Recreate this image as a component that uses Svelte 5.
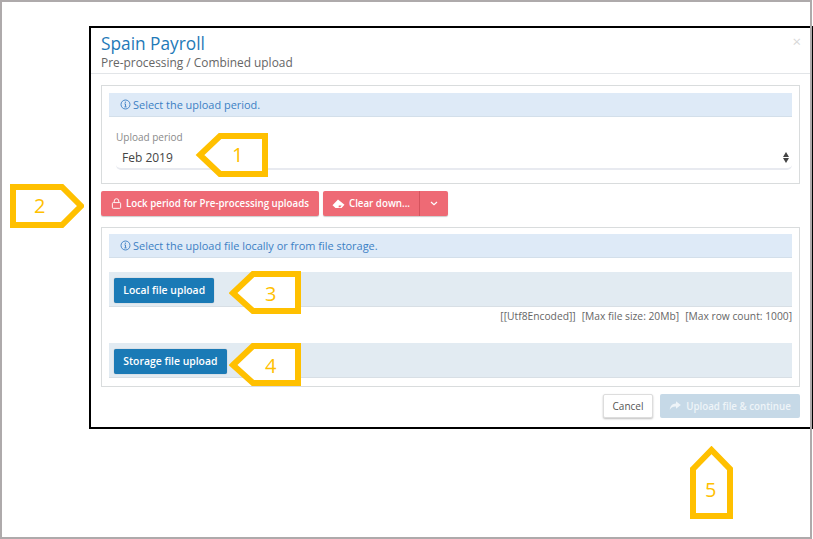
<script>
  const callouts = [
    { n: 1, cls: 'c1', w: 74, h: 44, pts: '5,22 25,3 70,3 70,41 25,41', tx: 37 },
    { n: 2, cls: 'c2', w: 74, h: 44, pts: '3,3 52,3 71,22 52,41 3,41', tx: 24 },
    { n: 3, cls: 'c3', w: 72, h: 44, pts: '4,22 24,3 69,3 69,40 24,40', tx: 36 },
    { n: 4, cls: 'c4', w: 72, h: 44, pts: '4,22 24,3 69,3 69,40 24,40', tx: 36 }
  ];
</script>

<div class="shot">
  <div class="modal">
    <button class="close" aria-label="Close">×</button>
    <header class="head">
      <h1>Spain Payroll</h1>
      <p>Pre-processing / Combined upload</p>
    </header>

    <div class="body">
      <section class="panel first">
        <div class="info">
          <svg class="i" viewBox="0 0 12 12"><circle cx="6" cy="6" r="4.9" /><path d="M6 5.4v3M4.8 8.6h2.4M4.8 5.3H6" /><circle class="dot" cx="5.9" cy="3.5" r=".7" /></svg>
          Select the upload period.
        </div>
        <div class="field">
          <label for="period">Upload period</label>
          <div class="select" id="period">
            <span>Feb 2019</span>
            <span class="arrows"><i class="up"></i><i class="down"></i></span>
          </div>
        </div>
      </section>

      <div class="actions">
        <button class="btn red lock">
          <svg class="bi" viewBox="0 0 12 12"><rect x="1.5" y="5" width="9" height="6.3" rx="1" /><path d="M3.5 5V3.3a2.5 2.5 0 0 1 5 0V5" /></svg>
          Lock period for Pre-processing uploads
        </button>
        <div class="split">
          <button class="btn red clear">
            <svg class="bi wide" viewBox="0 0 13 12"><path class="fill" fill-rule="evenodd" d="M.5 7.2 6 1.6l6.5 5.1-3 3.4h-6zM6.8 7.6h2.9L8.2 9.3H6.6z" /></svg>
            Clear down...
          </button>
          <button class="btn red caret" aria-label="More">
            <svg class="chev" viewBox="0 0 8 5"><path d="M1 1l3 2.6L7 1" /></svg>
          </button>
        </div>
      </div>

      <section class="panel second">
        <div class="info">
          <svg class="i" viewBox="0 0 12 12"><circle cx="6" cy="6" r="4.9" /><path d="M6 5.4v3M4.8 8.6h2.4M4.8 5.3H6" /><circle class="dot" cx="5.9" cy="3.5" r=".7" /></svg>
          Select the upload file locally or from file storage.
        </div>
        <div class="well local"><button class="btn blue">Local file upload</button></div>
        <div class="limits">
          <span>[[Utf8Encoded]]</span>
          <span>[Max file size: 20Mb]</span>
          <span>[Max row count: 1000]</span>
        </div>
        <div class="well"><button class="btn blue">Storage file upload</button></div>
      </section>

      <footer class="foot">
        <button class="btn cancel">Cancel</button>
        <button class="btn upload">
          <svg class="bi big" viewBox="0 0 12 12"><path class="fill" d="M7 1.2 11.8 5 7 8.8V6.5C4.4 6.3 2.4 7 .8 9.8 1 6 3.4 3.6 7 3.4z" /></svg>
          Upload file &amp; continue
        </button>
      </footer>
    </div>
  </div>

  {#each callouts as c}
    <div class="callout {c.cls}">
      <svg width={c.w} height={c.h} viewBox="0 0 {c.w} {c.h}"><polygon points={c.pts} /></svg>
      <span style="left:{c.tx}px">{c.n}</span>
    </div>
  {/each}
  <div class="callout c5">
    <svg width="44" height="74" viewBox="0 0 44 74"><polygon points="3,23 21.5,4 40,23 40,70 3,70" /></svg>
    <span>5</span>
  </div>

  <div class="frame"></div>
</div>

<style>
  :global(body) {
    margin: 0;
    background: #fff;
  }
  .shot {
    position: relative;
    width: 813px;
    height: 539px;
    box-sizing: border-box;
    overflow: hidden;
    padding: 26px 0 0 89px;
    font-family: "Open Sans", sans-serif;
    color: #555;
  }
  .frame {
    position: absolute;
    top: 0;
    left: 0;
    width: 812px;
    height: 539px;
    box-sizing: border-box;
    border: 2px solid #aeaaab;
    pointer-events: none;
  }
  .modal {
    position: relative;
    box-sizing: border-box;
    width: 724px;
    height: 403px;
    border: 2px solid #000;
    border-right-width: 1px;
    background: #fff;
  }
  .close {
    position: absolute;
    top: 3px;
    right: 11px;
    padding: 0;
    border: 0;
    background: none;
    color: #d8d8d8;
    font: 15px "Open Sans", sans-serif;
  }
  .head {
    height: 45px;
    padding: 0 0 0 10px;
    border-bottom: 1px solid #e2e5e8;
  }
  h1 {
    margin: 0;
    padding-top: 5px;
    font-size: 17.3px;
    line-height: 21px;
    font-weight: 400;
    color: #1f7ab8;
  }
  .head p {
    margin: 0;
    font-size: 11.9px;
    line-height: 17px;
    color: #666;
  }
  .body {
    padding: 11px 10px 0 10px;
  }
  .panel {
    box-sizing: border-box;
    width: 699px;
    border: 1px solid #d9dcdd;
    padding: 7px 7px 0;
  }
  .panel.first {
    height: 99px;
  }
  .panel.second {
    height: 160px;
    padding-top: 6px;
  }
  .info {
    display: flex;
    align-items: center;
    gap: 2px;
    height: 24px;
    box-sizing: border-box;
    padding-left: 11px;
    background: #deeaf7;
    border-bottom: 1px solid #d3dfea;
    color: #3b7fc4;
    font-size: 10.95px;
  }
  .i {
    width: 11px;
    height: 11px;
    fill: none;
    stroke: #3b7fc4;
    stroke-width: 1;
  }
  .i .dot {
    fill: #3b7fc4;
    stroke: none;
  }
  .field {
    padding: 14px 0 0 7px;
  }
  .field label {
    display: block;
    font-size: 10px;
    line-height: 13px;
    color: #8a8a8a;
  }
  .select {
    display: flex;
    justify-content: space-between;
    align-items: center;
    height: 26px;
    box-sizing: border-box;
    padding: 2px 3px 0 6px;
    border-bottom: 2px solid #e8eaf0;
    border-radius: 0 0 5px 5px;
    font-size: 12px;
    color: #444;
  }
  .arrows {
    display: flex;
    flex-direction: column;
    gap: 1px;
  }
  .arrows i {
    display: block;
    width: 0;
    border-left: 3px solid transparent;
    border-right: 3px solid transparent;
  }
  .arrows .up {
    border-bottom: 5px solid #444;
  }
  .arrows .down {
    border-top: 5px solid #444;
  }
  .actions {
    display: flex;
    gap: 4px;
    margin: 7px 0 11px;
  }
  .btn {
    display: inline-flex;
    align-items: center;
    justify-content: center;
    box-sizing: border-box;
    padding: 0;
    border: 0;
    border-radius: 2px;
    font-family: inherit;
    font-size: 9.75px;
    font-weight: 600;
  }
  .bi {
    width: 11px;
    height: 11px;
    fill: none;
    stroke: #fff;
    stroke-width: 1;
  }
  .bi.wide {
    width: 13px;
    height: 12px;
  }
  .bi.big {
    width: 12px;
    height: 12px;
  }
  .bi .fill {
    fill: currentColor;
    stroke: none;
  }
  .red {
    height: 25px;
    background: #ee6a75;
    color: #fff;
    box-shadow: 0 1px 1px rgba(0, 0, 0, 0.2);
  }
  .lock {
    width: 218px;
    gap: 4px;
  }
  .split {
    display: flex;
  }
  .clear {
    width: 97px;
    gap: 4px;
    border-radius: 2px 0 0 2px;
    border-right: 1px solid #d9555f;
  }
  .caret {
    width: 28px;
    border-radius: 0 2px 2px 0;
  }
  .chev {
    width: 8px;
    height: 5px;
    fill: none;
    stroke: #fff;
    stroke-width: 1.2;
  }
  .well {
    box-sizing: border-box;
    height: 35px;
    padding: 5px;
    background: #e2ebf2;
    border-bottom: 1px solid #d8dfe5;
  }
  .well.local {
    margin-top: 14px;
  }
  .blue {
    height: 25px;
    padding: 0 9.3px;
    background: #1a7ab6;
    color: #fff;
    font-size: 10.4px;
    box-shadow: 0 0 1px rgba(0, 0, 0, 0.4);
  }
  .limits {
    display: flex;
    justify-content: flex-end;
    gap: 6px;
    height: 36px;
    padding-top: 3px;
    box-sizing: border-box;
    font-size: 10.28px;
    line-height: 13px;
    color: #666;
  }
  .foot {
    display: flex;
    justify-content: flex-end;
    gap: 7px;
    width: 699px;
    margin-top: 7px;
  }
  .cancel {
    width: 50px;
    height: 24px;
    background: #fff;
    color: #555;
    font-size: 10px;
    font-weight: 400;
    border: 1px solid #ddd;
    box-shadow: 0 1px 2px rgba(0, 0, 0, 0.25);
  }
  .upload {
    width: 140px;
    height: 24px;
    gap: 5px;
    background: #c6d9e7;
    color: #eef4f8;
  }
  .callout {
    position: absolute;
  }
  .callout svg {
    display: block;
  }
  .callout polygon {
    fill: #fff;
    stroke: #ffc000;
    stroke-width: 6;
    stroke-linejoin: miter;
  }
  .callout span {
    position: absolute;
    top: 9px;
    color: #ffc000;
    font: 400 20px/26px "Open Sans", sans-serif;
  }
  .c1 { left: 195px; top: 133px; }
  .c2 { left: 10px; top: 184px; }
  .c3 { left: 229px; top: 271px; }
  .c3 span { top: 10px; }
  .c4 { left: 229px; top: 343px; }
  .c4 span { top: 10px; }
  .c5 { left: 690px; top: 446px; }
  .c5 span { left: 15px; top: 31px; }
</style>
